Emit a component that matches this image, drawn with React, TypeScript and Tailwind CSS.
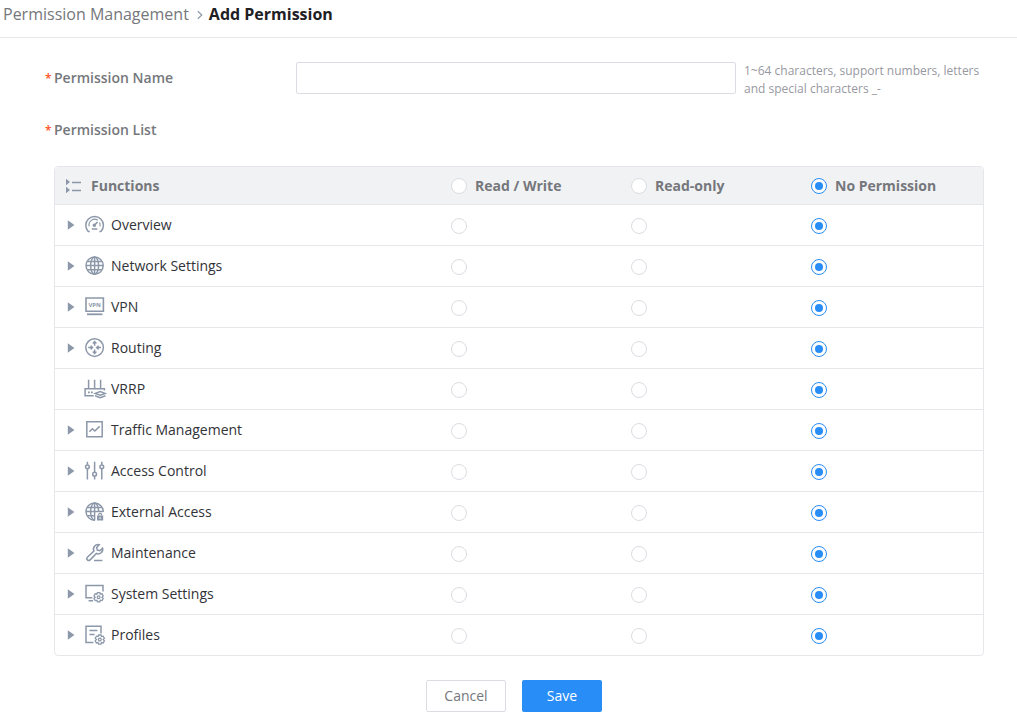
import { useState } from 'react'
import type { ReactNode } from 'react'

type Level = 'rw' | 'ro' | 'none'

interface FunctionItem {
  id: string
  name: string
  icon: ReactNode
  expandable: boolean
}

const LEVELS: { value: Level; label: string }[] = [
  { value: 'rw', label: 'Read / Write' },
  { value: 'ro', label: 'Read-only' },
  { value: 'none', label: 'No Permission' },
]

const FUNCTIONS: FunctionItem[] = [
  {
    id: 'overview',
    name: 'Overview',
    expandable: true,
    icon: (
      <>
        <path d="M3.2 16.4a8.8 8.8 0 1 1 12.8 0M3 16.4h1.8M14.4 16.4h1.8" />
        <path d="M4.2 11.4a5.7 5.7 0 0 1 8.6-6.2M14.6 7.6a5.7 5.7 0 0 1 .4 3.8" strokeWidth="1.2" />
        <path d="M9.6 10l3-3" strokeWidth="1.7" />
        <circle cx="9.3" cy="10.3" r="1" fill="currentColor" />
        <path d="M6.8 14h5.6" />
      </>
    ),
  },
  {
    id: 'network',
    name: 'Network Settings',
    expandable: true,
    icon: (
      <>
        <circle cx="9.6" cy="9.6" r="8.6" />
        <ellipse cx="9.6" cy="9.6" rx="4" ry="8.6" />
        <path d="M9.6 1v17.2M1 9.6h17.2M2.4 5.5h14.4M2.4 13.7h14.4" />
      </>
    ),
  },
  {
    id: 'vpn',
    name: 'VPN',
    expandable: true,
    icon: (
      <>
        <path d="M1 1h17.4v13.2H1z" strokeWidth="1.6" />
        <path d="M2 17.3h15.4" strokeWidth="1.8" />
        <text
          x="9.7"
          y="9.8"
          textAnchor="middle"
          fontSize="6"
          fontWeight="700"
          fill="currentColor"
          stroke="none"
        >
          VPN
        </text>
      </>
    ),
  },
  {
    id: 'routing',
    name: 'Routing',
    expandable: true,
    icon: (
      <>
        <circle cx="9.6" cy="9.6" r="8.8" />
        <path d="M9.6 7.8V4M9.6 11.4v3.8M3.2 9.6H7M16 9.6h-3.8" />
        <path d="M7.8 5.6l1.8-1.9 1.8 1.9M7.8 13.6l1.8 1.9 1.8-1.9M5.6 7.8l1.9 1.8-1.9 1.8M13.6 7.8l-1.9 1.8 1.9 1.8" />
      </>
    ),
  },
  {
    id: 'vrrp',
    name: 'VRRP',
    expandable: false,
    icon: (
      <>
        <path d="M3.6 .8v9M9.6 .8v9M15.6 .8v9" />
        <path d="M19.4 11.6V9.8H.1v7h8.6" />
        <path d="M3 13.3h1.8M6 13.3h1.8" strokeWidth="1.7" />
        <path d="M10.2 14.4l5-1.9 5 1.9-5 1.9z" />
        <path d="M10 16.8l5.2 2 5.2-2" />
      </>
    ),
  },
  {
    id: 'traffic',
    name: 'Traffic Management',
    expandable: true,
    icon: (
      <>
        <path d="M1.8 1.8h15.4v15H1.8z" />
        <path d="M4.4 11.8l3-3 2.4 2.2 4.8-4.6" />
      </>
    ),
  },
  {
    id: 'access',
    name: 'Access Control',
    expandable: true,
    icon: (
      <>
        <path d="M2.4 .8v3M2.4 7.8v10.6M9.6 .8v10.4M9.6 15.2v3.2M16.8 .8v3M16.8 7.8v10.6" />
        <circle cx="2.4" cy="5.8" r="1.9" />
        <circle cx="9.6" cy="13.2" r="1.9" />
        <circle cx="16.8" cy="5.8" r="1.9" />
      </>
    ),
  },
  {
    id: 'external',
    name: 'External Access',
    expandable: true,
    icon: (
      <>
        <path d="M18.2 9.9A8.6 8.6 0 1 0 9.9 18.2" />
        <path d="M13.6 9.6c0-4.8-1.9-8.6-4-8.6s-4 3.8-4 8.6 1.9 8.6 4 8.6" />
        <path d="M9.6 1v17.2M1 9.6h17M2.4 5.5h14.4M2.4 13.7h7.8" />
        <path d="M12 13.4h6.2v5.2H12z" fill="currentColor" stroke="none" />
        <path d="M13.6 13.6v-.8a1.5 1.5 0 0 1 3 0v.8" strokeWidth="1.2" />
        <path d="M15.1 15.2v1.6" stroke="#fff" strokeWidth="1.2" />
      </>
    ),
  },
  {
    id: 'maintenance',
    name: 'Maintenance',
    expandable: true,
    icon: (
      <>
        <path d="M14.2 1.7a4.6 4.6 0 0 0-5.3 6.4l-6.5 6.1a1.9 1.9 0 0 0 2.7 2.7l6.3-6.4a4.6 4.6 0 0 0 6.2-5.4l-2.8 2.6-2.5-.6-.6-2.6z" />
        <path d="M9 17.5h8.4" />
      </>
    ),
  },
  {
    id: 'system',
    name: 'System Settings',
    expandable: true,
    icon: (
      <>
        <path d="M18 7.6V1.4H1v12.4h6.4" />
        <path d="M3.6 16.8H8" />
        <Gear cx={13.6} cy={13.2} />
      </>
    ),
  },
  {
    id: 'profiles',
    name: 'Profiles',
    expandable: true,
    icon: (
      <>
        <path d="M16 8.6V1.2H1v16.2h7.4" />
        <path d="M4.4 5.6h8M4.4 9.4h5.2" />
        <Gear cx={14.8} cy={14.6} />
      </>
    ),
  },
]

const initialLevels = Object.fromEntries(FUNCTIONS.map((f) => [f.id, 'none'])) as Record<string, Level>

export default function App() {
  const [name, setName] = useState('')
  const [levels, setLevels] = useState<Record<string, Level>>(initialLevels)

  const allAt = (level: Level) => FUNCTIONS.every((f) => levels[f.id] === level)

  const setAll = (level: Level) =>
    setLevels(Object.fromEntries(FUNCTIONS.map((f) => [f.id, level])) as Record<string, Level>)

  return (
    <div className="bg-white font-['Open_Sans','Noto_Sans',sans-serif] text-sm text-[#323338]">
      <nav
        aria-label="Breadcrumb"
        className="flex items-center border-b border-[#e6e7eb] px-[3px] pt-1 pb-3 text-base leading-[21px]"
      >
        <a href="#permissions" className="text-[#75777c]">
          Permission Management
        </a>
        <svg className="mx-1 size-3" viewBox="0 0 12 12" fill="none" stroke="#8f99a8" strokeWidth="1.2" aria-hidden="true">
          <path d="M4.8 2.2l4 3.8-4 3.8" />
        </svg>
        <h1 className="font-bold text-[#1f2024]">Add Permission</h1>
      </nav>

      <form className="pt-6 pr-[33px] pb-3 pl-[54px]" onSubmit={(e) => e.preventDefault()}>
        <div className="flex">
          <label htmlFor="permission-name" className="w-[242px] shrink-0 leading-8 font-semibold text-[#75777c]">
            <Required />
            Permission Name
          </label>
          <input
            id="permission-name"
            type="text"
            value={name}
            onChange={(e) => setName(e.target.value)}
            aria-describedby="permission-name-hint"
            className="h-8 w-[440px] rounded-xs border border-[#dcdde2] px-3 outline-none focus:border-[#288df7]"
          />
          <p id="permission-name-hint" className="ml-2 flex-1 text-xs leading-[18px] text-[#97999f]">
            1~64 characters, support numbers, letters and special characters _-
          </p>
        </div>

        <h2 id="permission-list" className="mt-4 leading-8 font-semibold text-[#75777c]">
          <Required />
          Permission List
        </h2>

        <div className="mt-5 overflow-hidden rounded-sm border border-[#e6e7eb]">
          <table aria-labelledby="permission-list" className="w-full table-fixed border-separate border-spacing-0">
            <colgroup>
              <col />
              <col className="w-[180px]" />
              <col className="w-[180px]" />
              <col className="w-[188px]" />
            </colgroup>
            <thead className="bg-[#f1f2f4] text-[#75777c]">
              <tr>
                <th className="h-[37px] p-0 text-left font-bold">
                  <div className="flex items-center pl-2.5">
                    <ListIcon />
                    <span className="ml-2">Functions</span>
                  </div>
                </th>
                {LEVELS.map((level) => (
                  <th key={level.value} className="h-[37px] p-0 pl-4 text-left font-bold">
                    <label className="flex items-center gap-2">
                      <Radio name="all" checked={allAt(level.value)} onChange={() => setAll(level.value)} />
                      {level.label}
                    </label>
                  </th>
                ))}
              </tr>
            </thead>
            <tbody>
              {FUNCTIONS.map((item) => (
                <FunctionRow
                  key={item.id}
                  item={item}
                  level={levels[item.id]}
                  onChange={(level) => setLevels((prev) => ({ ...prev, [item.id]: level }))}
                />
              ))}
            </tbody>
          </table>
        </div>

        <div className="mt-6 flex justify-center gap-4 pr-2.5">
          <button
            type="button"
            className="h-8 w-20 rounded-xs border border-[#dcdde2] bg-white text-[#75777c] hover:border-[#288df7] hover:text-[#288df7]"
          >
            Cancel
          </button>
          <button type="submit" className="h-8 w-20 rounded-xs bg-[#288df7] text-white hover:bg-[#4ba1f9]">
            Save
          </button>
        </div>
      </form>
    </div>
  )
}

function FunctionRow({
  item,
  level,
  onChange,
}: {
  item: FunctionItem
  level: Level
  onChange: (level: Level) => void
}) {
  const [open, setOpen] = useState(false)

  return (
    <tr>
      <th scope="row" className="h-[41px] border-t border-[#e6e7eb] p-0 text-left font-normal">
        <div className="flex items-center gap-1.5 pl-3">
          {item.expandable ? (
            <button
              type="button"
              aria-expanded={open}
              aria-label={`Expand ${item.name}`}
              onClick={() => setOpen(!open)}
              className="text-[#8c98a9]"
            >
              <svg className={`size-3 ${open ? 'rotate-90' : ''}`} viewBox="0 0 12 12" fill="currentColor">
                <path d="M.8 1.3v9.4L7.4 6z" />
              </svg>
            </button>
          ) : (
            <span className="w-3" />
          )}
          <svg
            className="size-5 overflow-visible text-[#8c98a9]"
            viewBox="0 0 20 20"
            fill="none"
            stroke="currentColor"
            strokeWidth="1.5"
            aria-hidden="true"
          >
            {item.icon}
          </svg>
          <span>{item.name}</span>
        </div>
      </th>
      {LEVELS.map((l) => (
        <td key={l.value} className="h-[41px] border-t border-[#e6e7eb] p-0 pt-0.5 pl-4">
          <Radio
            name={item.id}
            label={`${item.name}: ${l.label}`}
            checked={level === l.value}
            onChange={() => onChange(l.value)}
          />
        </td>
      ))}
    </tr>
  )
}

function Radio({
  name,
  label,
  checked,
  onChange,
}: {
  name: string
  label?: string
  checked: boolean
  onChange: () => void
}) {
  return (
    <input
      type="radio"
      name={name}
      aria-label={label}
      checked={checked}
      onChange={onChange}
      className="grid size-4 appearance-none place-content-center rounded-full border border-[#dcdde2] bg-white before:size-2 before:rounded-full checked:border-[#288df7] checked:before:bg-[#288df7]"
    />
  )
}

function Required() {
  return <span className="-ml-[9px] inline-block w-[9px] text-xs text-[#ff4d20]">*</span>
}

function Gear({ cx, cy }: { cx: number; cy: number }) {
  return (
    <g transform={`translate(${cx} ${cy})`} strokeWidth="1.3">
      <path d="M-1.2-4.6h2.4l.5 1.6 1.7-.4L4.6-1.3 3.4 0l1.2 1.3-1.2 2.1-1.7-.4-.5 1.6h-2.4l-.5-1.6-1.7.4-1.2-2.1L-3.4 0l-1.2-1.3 1.2-2.1 1.7.4z" />
      <circle r="1.4" />
    </g>
  )
}

function ListIcon() {
  return (
    <svg className="size-[18px] text-[#8c98a9]" viewBox="0 0 18 18" fill="none" aria-hidden="true">
      <path d="M1 1.8v6.4L5 5zM1 9.8v6.4L5 13z" fill="currentColor" />
      <path d="M7 5.5h9M7 13.5h9" stroke="currentColor" strokeWidth="1.3" />
    </svg>
  )
}
